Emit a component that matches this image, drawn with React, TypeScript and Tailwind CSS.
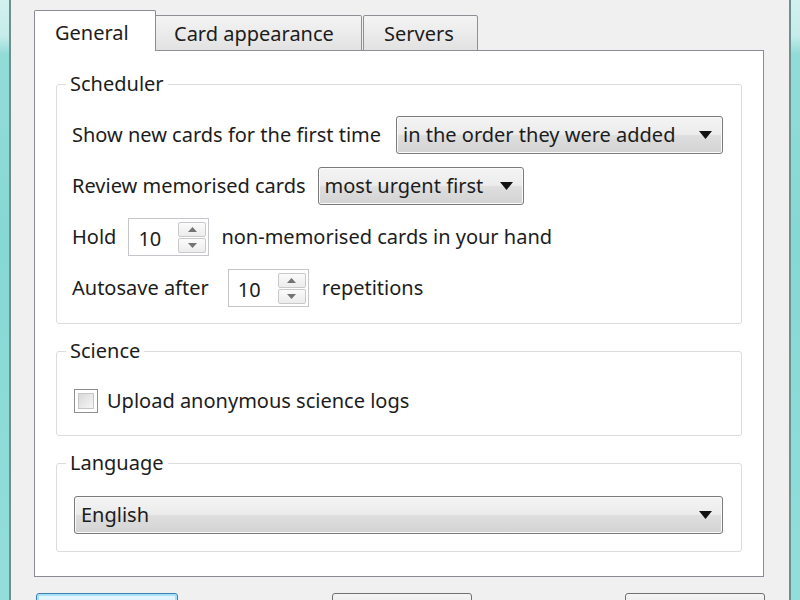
const font = { fontFamily: '"Noto Sans", "Open Sans", sans-serif' };

function ArrowDown() {
  return (
    <svg width="13" height="8" viewBox="0 0 13 8" className="shrink-0">
      <path d="M0 0 H13 L6.5 8 Z" fill="#111" />
    </svg>
  );
}

function ComboBox({ value, width }: { value: string; width: string }) {
  return (
    <div
      className={`${width} h-[38px] flex items-center justify-between pl-[6px] pr-[10px] rounded-[3px] border border-[#7a7a7a] bg-[linear-gradient(to_bottom,#f4f4f4_0%,#ececec_48%,#dedede_52%,#d3d3d3_100%)] shadow-[inset_0_0_0_1px_#fafafa]`}
    >
      <span className="text-[20px] text-[#1c1c1c] leading-none">{value}</span>
      <ArrowDown />
    </div>
  );
}

function SpinBox({ value }: { value: string }) {
  return (
    <div className="w-[81px] h-[38px] flex items-center border border-[#c4c6cc] bg-white pl-[9px] pr-[2px]">
      <span className="flex-1 text-[20px] text-[#1c1c1c] leading-none pt-[3px]">{value}</span>
      <div className="w-[28px] h-[31px] flex flex-col gap-px">
        <div className="flex-1 flex items-center justify-center border border-[#c9c9c9] rounded-[2px] bg-[linear-gradient(to_bottom,#fbfbfb,#ececec)]">
          <svg width="9" height="5" viewBox="0 0 9 5">
            <path d="M0 5 H9 L4.5 0 Z" fill="#737373" />
          </svg>
        </div>
        <div className="flex-1 flex items-center justify-center border border-[#c9c9c9] rounded-[2px] bg-[linear-gradient(to_bottom,#fbfbfb,#ececec)]">
          <svg width="9" height="5" viewBox="0 0 9 5">
            <path d="M0 0 H9 L4.5 5 Z" fill="#737373" />
          </svg>
        </div>
      </div>
    </div>
  );
}

function Group({ title, children, className }: { title: string; children: React.ReactNode; className: string }) {
  return (
    <fieldset className="border border-[#dadcdf] rounded-[3px] p-0">
      <legend className="ml-[9px] px-[4px] text-[20px] leading-[26px] text-[#1c1c1c]">{title}</legend>
      <div className={className}>{children}</div>
    </fieldset>
  );
}

export default function App() {
  return (
    <div className="w-[800px] h-[600px] overflow-hidden flex" style={font}>
      <div className="w-[9px] bg-[linear-gradient(to_bottom,#d2f1ef_0%,#c5ecea_6%,#92dcd8_9%,#86d8d4_40%,#92dedb_100%)]" />
      <div className="w-[2px] bg-[#6f8e8e]" />
      <div className="flex-1 bg-[#f0f0f0] pt-[10px] pl-[23px]">
        <div className="flex items-end -mb-px">
          <div className="relative z-10 w-[122px] h-[41px] bg-white border border-b-0 border-[#898c95] rounded-t-[2px] pl-[20px] pt-[7px] text-[20px] text-[#1c1c1c]">
            General
          </div>
          <div className="w-[206px] h-[36px] border border-l-0 border-[#8e9096] rounded-tr-[2px] bg-[linear-gradient(to_bottom,#f4f4f4,#e2e2e2)] pl-[18px] pt-[3px] text-[20px] text-[#1c1c1c]">
            Card appearance
          </div>
          <div className="w-[115px] h-[36px] ml-px border border-[#8e9096] rounded-t-[2px] bg-[linear-gradient(to_bottom,#f4f4f4,#e2e2e2)] pl-[20px] pt-[3px] text-[20px] text-[#1c1c1c]">
            Servers
          </div>
        </div>
        <div className="w-[730px] h-[527px] bg-white border border-[#898c95] px-[21px] pt-[20px] flex flex-col gap-[14px]">
          <Group title="Scheduler" className="px-[15px] pt-[19px] pb-[16px]">
            <div className="flex flex-col gap-[13px] text-[20px] text-[#1c1c1c]">
              <div className="h-[38px] flex items-center gap-[15px]">
                <span>Show new cards for the first time</span>
                <ComboBox value="in the order they were added" width="w-[327px]" />
              </div>
              <div className="h-[38px] flex items-center gap-[12px]">
                <span>Review memorised cards</span>
                <ComboBox value="most urgent first" width="w-[206px]" />
              </div>
              <div className="h-[38px] flex items-center gap-[12px]">
                <span>Hold</span>
                <SpinBox value="10" />
                <span>non-memorised cards in your hand</span>
              </div>
              <div className="h-[38px] flex items-center">
                <span>Autosave after</span>
                <div className="ml-[19px] mr-[13px]">
                  <SpinBox value="10" />
                </div>
                <span>repetitions</span>
              </div>
            </div>
          </Group>
          <Group title="Science" className="px-[17px] pt-[19px] pb-[16px]">
            <div className="h-[36px] flex items-center gap-[9px] text-[20px] text-[#1c1c1c]">
              <div className="w-[24px] h-[24px] border border-[#8f8f8f] bg-white p-[3px]">
                <div className="w-full h-full border border-[#c6c6c6] bg-[linear-gradient(135deg,#d8d8d8,#f7f7f7)]" />
              </div>
              <span>Upload anonymous science logs</span>
            </div>
          </Group>
          <Group title="Language" className="pl-[17px] pr-[18px] pt-[20px] pb-[17px]">
            <ComboBox value="English" width="w-full" />
          </Group>
        </div>
        <div className="flex mt-[16px] pl-[2px]">
          <div className="w-[142px] h-[30px] rounded-[3px] border border-[#3c7fb1] bg-[linear-gradient(to_bottom,#e8f6fd,#c4e5f6)] shadow-[inset_0_0_0_2px_#a8e1fa]" />
          <div className="w-[140px] h-[30px] ml-[154px] rounded-[3px] border border-[#707070] bg-[linear-gradient(to_bottom,#f4f4f4,#e0e0e0)]" />
          <div className="w-[140px] h-[30px] ml-[153px] rounded-[3px] border border-[#707070] bg-[linear-gradient(to_bottom,#f4f4f4,#e0e0e0)]" />
        </div>
      </div>
      <div className="w-[2px] bg-[#6f8e8e]" />
      <div className="w-[9px] bg-[linear-gradient(to_bottom,#d2f1ef_0%,#c5ecea_6%,#92dcd8_9%,#86d8d4_40%,#92dedb_100%)]" />
    </div>
  );
}
